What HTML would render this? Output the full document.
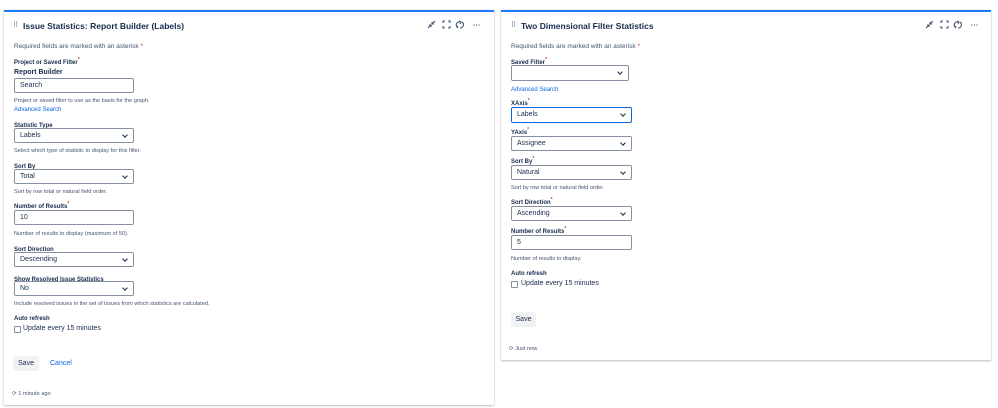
<!DOCTYPE html><html><head><style>
*{margin:0;padding:0;box-sizing:border-box}
body{width:998px;height:408px;background:#fff;font-family:"Liberation Sans",sans-serif;color:#172b4d;position:relative;overflow:hidden}
.p{position:absolute;background:#fff;border-top:2px solid #1d7afc;box-shadow:0 1px 2px rgba(9,30,66,.25),0 0 1px rgba(9,30,66,.2)}
.a{position:absolute;white-space:nowrap;line-height:10px}
.t{font-size:8.5px;font-weight:bold}
.r{font-size:6.5px;color:#44546f}
.l{font-size:6px;font-weight:bold;color:#172b4d}
.h{font-size:5.6px;color:#44546f}
.lk{font-size:6px;color:#0c66e4}
.st{color:#c9372c}
.s{color:#c9372c;font-size:5px;position:relative;top:-3px;line-height:0}
.in{position:absolute;border:1px solid #8590a2;border-radius:2px;font-size:7px;padding:0 5px;line-height:13px}
.sel::after{content:"";position:absolute;right:6px;top:4px;width:3px;height:3px;border-right:1.3px solid #172b4d;border-bottom:1.3px solid #172b4d;transform:rotate(45deg)}
.btn{position:absolute;background:#f1f2f4;border-radius:2px;font-size:7px;text-align:center;line-height:15px}
.cb{position:absolute;width:7px;height:7px;border:1px solid #8590a2;border-radius:1px}
</style></head><body>
<div class="p" style="left:4px;top:10px;width:490px;height:395px"></div>
<div class="p" style="left:501px;top:10px;width:490px;height:350px"></div>

<svg style="position:absolute;left:0;top:0" width="998" height="408" fill="none" stroke="#44546f" stroke-width="1.1">
<g id="ic" transform="translate(427,20)">
<path d="M1 8l3-3M2 5h2v2M8 1L5 4M5 2v2h2"/>
<path d="M16 3V1h2M21 1h2v2M23 6v2h-2M18 8h-2V6"/>
<path d="M34 2a3.3 3.3 0 0 0-4 5M33 8a3.3 3.3 0 0 0 2-6M32 1l2 1-1 2M31 8l-1-1 1-1"/>
<g fill="#44546f" stroke="none"><circle cx="47" cy="5" r=".6"/><circle cx="49.5" cy="5" r=".6"/><circle cx="52" cy="5" r=".6"/></g>
</g>
<use href="#ic" transform="translate(498,0)"/>
</svg>

<!-- left -->
<div class="a" style="left:13px;top:21px;font-size:7px;color:#626f86">⠿</div>
<div class="a t" style="left:23px;top:21px">Issue Statistics: Report Builder (Labels)</div>
<div class="a r" style="left:14px;top:42px">Required fields are marked with an asterisk <span class="st">*</span></div>
<div class="a l" style="left:14px;top:58px">Project or Saved Filter<span class="s">*</span></div>
<div class="a" style="left:14px;top:68px;font-size:7px;font-weight:bold">Report Builder</div>
<div class="in" style="left:14px;top:78px;width:120px;height:15px">Search</div>
<div class="a h" style="left:14px;top:96px">Project or saved filter to use as the basis for the graph.</div>
<div class="a lk" style="left:14px;top:105px">Advanced Search</div>
<div class="a l" style="left:14px;top:121px">Statistic Type</div>
<div class="in sel" style="left:14px;top:128px;width:120px;height:15px">Labels</div>
<div class="a h" style="left:14px;top:146px">Select which type of statistic to display for this filter.</div>
<div class="a l" style="left:14px;top:162px">Sort By</div>
<div class="in sel" style="left:14px;top:169px;width:120px;height:15px">Total</div>
<div class="a h" style="left:14px;top:187px">Sort by row total or natural field order.</div>
<div class="a l" style="left:14px;top:202px">Number of Results<span class="s">*</span></div>
<div class="in" style="left:14px;top:210px;width:120px;height:15px">10</div>
<div class="a h" style="left:14px;top:229px">Number of results to display (maximum of 50).</div>
<div class="a l" style="left:14px;top:245px">Sort Direction</div>
<div class="in sel" style="left:14px;top:252px;width:120px;height:15px">Descending</div>
<div class="a l" style="left:14px;top:275px">Show Resolved Issue Statistics</div>
<div class="in sel" style="left:14px;top:281px;width:120px;height:15px">No</div>
<div class="a h" style="left:14px;top:299px">Include resolved issues in the set of issues from which statistics are calculated.</div>
<div class="a l" style="left:14px;top:314px">Auto refresh</div>
<div class="cb" style="left:14px;top:326px"></div>
<div class="a" style="left:23px;top:324px;font-size:7px">Update every 15 minutes</div>
<div class="btn" style="left:13px;top:356px;width:26px;height:15px">Save</div>
<div class="a lk" style="left:50px;top:359px;font-size:7px">Cancel</div>
<div class="a h" style="left:12px;top:389px">⟳ 1 minute ago</div>

<!-- right -->
<div class="a" style="left:511px;top:21px;font-size:7px;color:#626f86">⠿</div>
<div class="a t" style="left:521px;top:21px">Two Dimensional Filter Statistics</div>
<div class="a r" style="left:511px;top:42px">Required fields are marked with an asterisk <span class="st">*</span></div>
<div class="a l" style="left:511px;top:58px">Saved Filter<span class="s">*</span></div>
<div class="in sel" style="left:511px;top:65px;width:118px;height:16px"></div>
<div class="a lk" style="left:511px;top:85px">Advanced Search</div>
<div class="a l" style="left:511px;top:99px">XAxis<span class="s">*</span></div>
<div class="in sel" style="left:511px;top:107px;width:121px;height:16px;border:1.5px solid #0c66e4;line-height:13px">Labels</div>
<div class="a l" style="left:511px;top:128px">YAxis<span class="s">*</span></div>
<div class="in sel" style="left:511px;top:136px;width:121px;height:15px">Assignee</div>
<div class="a l" style="left:511px;top:157px">Sort By<span class="s">*</span></div>
<div class="in sel" style="left:511px;top:165px;width:121px;height:15px">Natural</div>
<div class="a h" style="left:511px;top:183px">Sort by row total or natural field order.</div>
<div class="a l" style="left:511px;top:198px">Sort Direction<span class="s">*</span></div>
<div class="in sel" style="left:511px;top:206px;width:121px;height:15px">Ascending</div>
<div class="a l" style="left:511px;top:227px">Number of Results<span class="s">*</span></div>
<div class="in" style="left:511px;top:235px;width:121px;height:15px">5</div>
<div class="a h" style="left:511px;top:254px">Number of results to display.</div>
<div class="a l" style="left:511px;top:269px">Auto refresh</div>
<div class="cb" style="left:511px;top:281px"></div>
<div class="a" style="left:521px;top:279px;font-size:7px">Update every 15 minutes</div>
<div class="btn" style="left:511px;top:312px;width:25px;height:15px">Save</div>
<div class="a h" style="left:509px;top:344px">⟳ Just now</div>
</body></html>
